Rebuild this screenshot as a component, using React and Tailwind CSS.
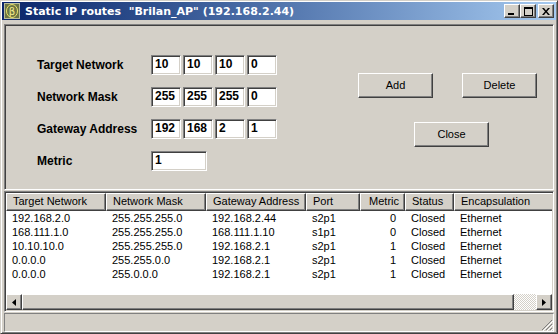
import React from 'react'

const raised = 'border border-t-white border-l-white border-r-[#404040] border-b-[#404040] shadow-[inset_-1px_-1px_0_#808080,inset_1px_1px_0_#d4d0c8]'
const sunken = 'border border-t-[#808080] border-l-[#808080] border-r-white border-b-white shadow-[inset_1px_1px_0_#404040,inset_-1px_-1px_0_#d4d0c8]'

const fields = [
  { label: 'Target Network', parts: ['10', '10', '10', '0'] },
  { label: 'Network Mask', parts: ['255', '255', '255', '0'] },
  { label: 'Gateway Address', parts: ['192', '168', '2', '1'] },
]

const cols = [
  { label: 'Target Network', w: 'w-[100px]' },
  { label: 'Network Mask', w: 'w-[100px]' },
  { label: 'Gateway Address', w: 'w-[100px]' },
  { label: 'Port', w: 'w-[54px]' },
  { label: 'Metric', w: 'w-[45px]', right: true },
  { label: 'Status', w: 'w-[49px]' },
  { label: 'Encapsulation', w: 'w-[100px]' },
]

const routes = [
  ['192.168.2.0', '255.255.255.0', '192.168.2.44', 's2p1', '0', 'Closed', 'Ethernet'],
  ['168.111.1.0', '255.255.255.0', '168.111.1.10', 's1p1', '0', 'Closed', 'Ethernet'],
  ['10.10.10.0', '255.255.255.0', '192.168.2.1', 's2p1', '1', 'Closed', 'Ethernet'],
  ['0.0.0.0', '255.255.0.0', '192.168.2.1', 's2p1', '1', 'Closed', 'Ethernet'],
  ['0.0.0.0', '255.0.0.0', '192.168.2.1', 's2p1', '1', 'Closed', 'Ethernet'],
]

const Box = ({ children, w = 'w-[30px]' }) => (
  <div className={`${sunken} ${w} h-[20px] bg-white pl-[3px] text-[12px] font-bold leading-[16px] text-black`}>{children}</div>
)

const Button = ({ children }) => (
  <button className={`${raised} w-[75px] h-[25px] bg-[#d4d0c8] text-[11px] text-black`}>{children}</button>
)

const CaptionButton = ({ children, className = '' }) => (
  <div className={`${raised} w-[16px] h-[14px] bg-[#d4d0c8] flex items-center justify-center ${className}`}>{children}</div>
)

export default function App() {
  return (
    <div className="w-[558px] h-[334px] bg-[#d4d0c8] p-[1px] border border-t-[#d4d0c8] border-l-[#d4d0c8] border-r-[#404040] border-b-[#404040] shadow-[inset_1px_1px_0_#fff,inset_-1px_-1px_0_#808080] flex flex-col overflow-hidden font-['Liberation_Sans',Arial,sans-serif]">
      {/* title bar */}
      <div className="h-[18px] shrink-0 flex items-center bg-gradient-to-r from-[#0a246a] to-[#a6caf0] pl-[2px] pr-[2px]">
        <svg width="16" height="16" viewBox="0 0 16 16" className="shrink-0">
          <rect x="0.5" y="0.5" width="15" height="15" fill="#6b7444" stroke="#b8bc98" />
          <ellipse cx="8" cy="8" rx="5.5" ry="6.5" fill="none" stroke="#e8e26a" strokeWidth="1" />
          <text x="8" y="12" textAnchor="middle" fontSize="10" fontFamily="DejaVu Sans" fill="#f4ee8a">β</text>
        </svg>
        <span className="ml-[5px] whitespace-pre text-white text-[11px] font-bold font-['DejaVu_Sans',sans-serif] leading-none">Static IP routes  "Brilan_AP" (192.168.2.44)</span>
        <div className="ml-auto flex items-center">
          <CaptionButton>
            <svg width="8" height="7" viewBox="0 0 8 7"><rect x="0" y="5" width="6" height="2" fill="#000" /></svg>
          </CaptionButton>
          <CaptionButton>
            <svg width="9" height="9" viewBox="0 0 9 9"><rect x="0.5" y="0.5" width="8" height="8" fill="none" stroke="#000" /><rect x="0" y="0" width="9" height="2" fill="#000" /></svg>
          </CaptionButton>
          <CaptionButton className="ml-[2px]">
            <svg width="8" height="7" viewBox="0 0 8 7"><path d="M0 0h2l2 2.5L6 0h2L5 3.5 8 7H6L4 4.5 2 7H0l3-3.5z" fill="#000" /></svg>
          </CaptionButton>
        </div>
      </div>

      <div className="flex-1 flex flex-col px-[2px] pt-[4px] pb-[1px]">
        {/* form panel */}
        <div className="h-[166px] shrink-0 flex border border-t-[#808080] border-l-[#808080] border-r-white border-b-white shadow-[inset_1px_1px_0_#404040,inset_-1px_-1px_0_#d4d0c8]">
          <div className="pl-[32px] pt-[30px] flex flex-col gap-[12px]">
            {fields.map(f => (
              <div key={f.label} className="flex items-center">
                <div className="w-[114px] text-[12px] font-bold text-black">{f.label}</div>
                <div className="flex gap-[2px]">
                  {f.parts.map((p, i) => <Box key={i}>{p}</Box>)}
                </div>
              </div>
            ))}
            <div className="flex items-center">
              <div className="w-[114px] text-[12px] font-bold text-black">Metric</div>
              <Box w="w-[56px]">1</Box>
            </div>
          </div>
          <div className="ml-[81px] pt-[48px] flex flex-col">
            <div className="flex gap-[29px]">
              <Button>Add</Button>
              <Button>Delete</Button>
            </div>
            <div className="ml-[56px] mt-[23px]">
              <Button>Close</Button>
            </div>
          </div>
        </div>

        {/* route list */}
        <div className={`${sunken} h-[121px] shrink-0 mt-[1px] bg-white flex flex-col overflow-hidden`}>
          <div className="flex h-[18px] shrink-0 mx-[1px] mt-[1px] bg-[#d4d0c8] overflow-hidden">
            {cols.map(c => (
              <div key={c.label} className={`${c.w} shrink-0 h-full border border-t-white border-l-white border-r-[#404040] border-b-[#404040] shadow-[inset_-1px_-1px_0_#808080] text-[11px] leading-[15px] text-black whitespace-nowrap ${c.right ? 'text-right pr-[5px]' : 'pl-[6px]'}`}>{c.label}</div>
            ))}
            <div className="flex-1 h-full border border-t-white border-l-white border-r-[#404040] border-b-[#404040] shadow-[inset_-1px_-1px_0_#808080]" />
          </div>
          <div className="pl-[1px]">
            {routes.map((r, ri) => (
              <div key={ri} className="flex h-[14px]">
                {r.map((v, i) => (
                  <div key={i} className={`${cols[i].w} shrink-0 text-[11px] leading-[14px] text-black whitespace-nowrap ${cols[i].right ? 'text-right pr-[9px]' : 'pl-[6px]'}`}>{v}</div>
                ))}
              </div>
            ))}
          </div>
          <div className="flex-1" />
          {/* horizontal scrollbar */}
          <div className="h-[16px] shrink-0 mx-[1px] mb-[1px] flex">
            <div className={`${raised} w-[16px] h-[16px] bg-[#d4d0c8] flex items-center justify-center`}>
              <svg width="4" height="7" viewBox="0 0 4 7"><path d="M4 0v7L0 3.5z" fill="#000" /></svg>
            </div>
            <div className={`${raised} flex-1 h-[16px] bg-[#d4d0c8]`} />
            <div className="w-[22px] h-[16px] bg-[repeating-conic-gradient(#ffffff_0_25%,#d4d0c8_0_50%)] bg-[length:2px_2px]" />
            <div className={`${raised} w-[16px] h-[16px] bg-[#d4d0c8] flex items-center justify-center`}>
              <svg width="4" height="7" viewBox="0 0 4 7"><path d="M0 0v7l4-3.5z" fill="#000" /></svg>
            </div>
          </div>
        </div>

        {/* status bar */}
        <div className="mt-[1px] h-[19px] shrink-0 border border-t-[#808080] border-l-[#808080] border-r-white border-b-white flex justify-end items-end">
          <svg width="12" height="12" viewBox="0 0 12 12">
            <path d="M11 1L1 11M11 5L5 11M11 9L9 11" stroke="#808080" strokeWidth="1" />
            <path d="M12 2L2 12M12 6L6 12M12 10L10 12" stroke="#fff" strokeWidth="1" />
          </svg>
        </div>
      </div>
    </div>
  )
}
